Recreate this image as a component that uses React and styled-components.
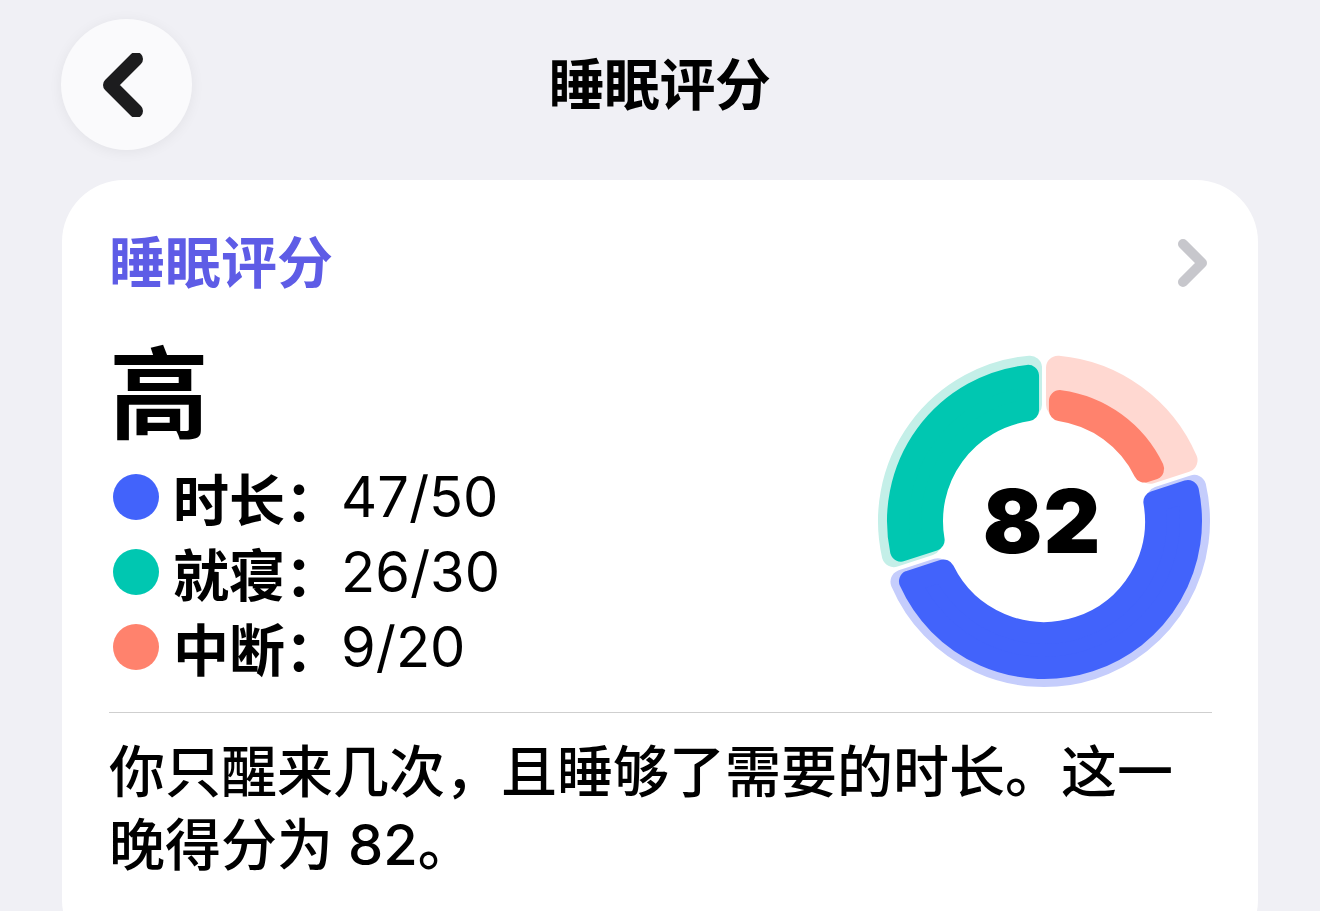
import React from "react";
import styled, { createGlobalStyle } from "styled-components";

const GlobalStyle = createGlobalStyle`
  body {
    margin: 0;
    background: #f0f0f5;
    font-family: "Inter", "Noto Sans CJK SC", sans-serif;
    color: #000;
  }
`;

// band = drawn thickness of the solid arc (px), out of the full track
const scores = [
  { key: "duration", label: "时长", value: 47, max: 50, band: 57, color: "#4263fb", light: "#c5cdfc", from: 72, to: 252 },
  { key: "bedtime", label: "就寝", value: 26, max: 30, band: 56, color: "#00c7b1", light: "#c4efe8", from: 252, to: 360 },
  { key: "interrupt", label: "中断", value: 9, max: 20, band: 31, color: "#ff826d", light: "#ffd8d1", from: 0, to: 72 },
];

const Page = styled.div`
  padding: 19px 62px 0 61px;
  min-height: 100vh;
  box-sizing: border-box;
  overflow: hidden;
`;

const Header = styled.header`
  display: grid;
  grid-template-columns: 1fr auto 1fr;
  align-items: center;
  height: 130px;
`;

const BackButton = styled.button`
  width: 131px;
  height: 131px;
  border-radius: 50%;
  border: none;
  background: #fafafc;
  box-shadow: 0 2px 14px rgba(0, 0, 0, 0.06);
  display: flex;
  align-items: center;
  justify-content: center;
  padding: 0;
  padding-right: 8px;
`;

const Title = styled.h1`
  margin: 0;
  padding-bottom: 9px;
  font-size: 56px;
  font-weight: 700;
  letter-spacing: -0.5px;
`;

const Card = styled.section`
  margin-top: 31px;
  margin-left: 1px;
  background: #fff;
  border-radius: 62px;
  padding: 47px 46px 80px 47px;
`;

const CardHead = styled.div`
  display: flex;
  align-items: center;
  justify-content: space-between;
`;

const CardTitle = styled.h2`
  margin: 0;
  font-size: 56px;
  line-height: 72px;
  font-weight: 700;
  color: #5e5ce6;
`;

const Body = styled.div`
  display: flex;
  justify-content: space-between;
  align-items: flex-start;
`;

const Left = styled.div`
  display: flex;
  flex-direction: column;
  padding-top: 31px;
`;

const Grade = styled.div`
  font-size: 100px;
  line-height: 129px;
  font-weight: 700;
`;

const Legend = styled.ul`
  list-style: none;
  margin: 0;
  padding: 0;
`;

const LegendRow = styled.li`
  display: flex;
  align-items: center;
  height: 75px;
  font-size: 56px;
`;

const Dot = styled.span`
  width: 46px;
  height: 46px;
  border-radius: 50%;
  background: ${(p) => p.$color};
  margin: 0 14px 0 4px;
  flex-shrink: 0;
`;

const Label = styled.span`
  font-weight: 700;
`;

const Value = styled.span`
  font-weight: 400;
`;

const RingWrap = styled.div`
  position: relative;
  width: 340px;
  height: 340px;
  margin-top: 52px;
  margin-right: -2px;
`;

const RingValue = styled.div`
  position: absolute;
  inset: 0;
  display: flex;
  align-items: center;
  justify-content: center;
  font-size: 88px;
  font-weight: 900;
  letter-spacing: 1px;
  padding-right: 4px;
`;

const Divider = styled.hr`
  border: none;
  height: 1px;
  background: #cfcfcf;
  margin: 21px 0 0 0;
`;

const Summary = styled.p`
  margin: 0;
  padding-top: 23px;
  font-size: 56px;
  line-height: 73px;
  font-weight: 500;
`;

const CX = 170;
const CY = 170;
const rad = (d) => (d * Math.PI) / 180;
const pt = (r, a) => [CX + r * Math.sin(rad(a)), CY - r * Math.cos(rad(a))];

function sectorPath(r0, r1, a0, a1, cr, gap) {
  const i0 = r0 + cr;
  const o1 = r1 - cr;
  const da0 = ((gap + cr) / i0) * (180 / Math.PI);
  const da1 = ((gap + cr) / o1) * (180 / Math.PI);
  const s0 = a0 + da0, e0 = a1 - da0;
  const s1 = a0 + da1, e1 = a1 - da1;
  const large = e1 - s1 > 180 ? 1 : 0;
  const largeI = e0 - s0 > 180 ? 1 : 0;
  const [ax, ay] = pt(o1, s1);
  const [bx, by] = pt(o1, e1);
  const [cx, cy] = pt(i0, e0);
  const [dx, dy] = pt(i0, s0);
  return `M${ax} ${ay} A${o1} ${o1} 0 ${large} 1 ${bx} ${by} L${cx} ${cy} A${i0} ${i0} 0 ${largeI} 0 ${dx} ${dy} Z`;
}

function ScoreRing() {
  const inner = 101;
  const outer = 166;
  return (
    <svg width="340" height="340" viewBox="0 0 340 340">
      {scores.map((s) => (
        <path
          key={s.key + "-bg"}
          d={sectorPath(inner + 4, outer, s.from, s.to, 12, 2)}
          fill={s.light}
          stroke={s.light}
          strokeWidth="24"
          strokeLinejoin="round"
        />
      ))}
      {scores.map((s) => (
        <path
          key={s.key}
          d={sectorPath(inner, inner + s.band, s.from, s.to, 11, 5)}
          fill={s.color}
          stroke={s.color}
          strokeWidth="22"
          strokeLinejoin="round"
        />
      ))}
    </svg>
  );
}

export default function App() {
  return (
    <>
      <GlobalStyle />
      <Page>
        <Header>
          <div>
            <BackButton aria-label="返回">
              <svg width="40" height="64" viewBox="0 0 40 64">
                <polyline points="33,6 7,32 33,58" fill="none" stroke="#1c1c1e" strokeWidth="14" strokeLinecap="round" strokeLinejoin="round" />
              </svg>
            </BackButton>
          </div>
          <Title>睡眠评分</Title>
          <div />
        </Header>
        <Card>
          <CardHead>
            <CardTitle>睡眠评分</CardTitle>
            <svg width="40" height="56" viewBox="0 0 40 56">
              <polyline points="11,9 30,28 11,47" fill="none" stroke="#c7c7cc" strokeWidth="10" strokeLinecap="round" strokeLinejoin="round" />
            </svg>
          </CardHead>
          <Body>
            <Left>
              <Grade>高</Grade>
              <Legend>
                {scores.map((s) => (
                  <LegendRow key={s.key}>
                    <Dot $color={s.color} />
                    <Label>{s.label}：</Label>
                    <Value>
                      {s.value}/{s.max}
                    </Value>
                  </LegendRow>
                ))}
              </Legend>
            </Left>
            <RingWrap>
              <ScoreRing />
              <RingValue>82</RingValue>
            </RingWrap>
          </Body>
          <Divider />
          <Summary>你只醒来几次，且睡够了需要的时长。这一晚得分为 82。</Summary>
        </Card>
      </Page>
    </>
  );
}
